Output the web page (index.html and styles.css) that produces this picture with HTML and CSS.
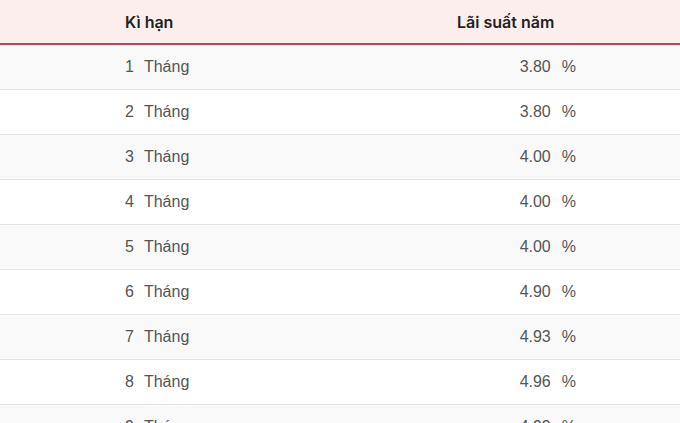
FILE: index.html
```html
<!DOCTYPE html>
<html lang="vi">
<head>
<meta charset="utf-8">
<link rel="stylesheet" href="styles.css">
</head>
<body>
<div class="table">
  <div class="row head">
    <div class="c1">Kì hạn</div>
    <div class="c2">Lãi suất năm</div>
  </div>
  <div class="row"><div class="c1"><span>1</span><span>Tháng</span></div><div class="c2 val"><span>3.80</span><span>%</span></div></div>
  <div class="row"><div class="c1"><span>2</span><span>Tháng</span></div><div class="c2 val"><span>3.80</span><span>%</span></div></div>
  <div class="row"><div class="c1"><span>3</span><span>Tháng</span></div><div class="c2 val"><span>4.00</span><span>%</span></div></div>
  <div class="row"><div class="c1"><span>4</span><span>Tháng</span></div><div class="c2 val"><span>4.00</span><span>%</span></div></div>
  <div class="row"><div class="c1"><span>5</span><span>Tháng</span></div><div class="c2 val"><span>4.00</span><span>%</span></div></div>
  <div class="row"><div class="c1"><span>6</span><span>Tháng</span></div><div class="c2 val"><span>4.90</span><span>%</span></div></div>
  <div class="row"><div class="c1"><span>7</span><span>Tháng</span></div><div class="c2 val"><span>4.93</span><span>%</span></div></div>
  <div class="row"><div class="c1"><span>8</span><span>Tháng</span></div><div class="c2 val"><span>4.96</span><span>%</span></div></div>
  <div class="row"><div class="c1"><span>9</span><span>Tháng</span></div><div class="c2 val"><span>4.99</span><span>%</span></div></div>
</div>
</body>
</html>
```
FILE: styles.css
```css
html, body {
  margin: 0;
  padding: 0;
  background: #ffffff;
  overflow: hidden;
}
.table {
  width: 680px;
  font-family: "Liberation Sans", Arial, sans-serif;
  font-size: 16px;
  color: #555555;
}
.row {
  display: grid;
  grid-template-columns: 125px 332px 119px 1fr;
  align-items: center;
  height: 44px;
  border-bottom: 1px solid #e2e2e2;
}
.row:nth-child(even) {
  background: #f9f9f9;
}
.row.head {
  height: 43px;
  background: #fdeeee;
  border-bottom: 2px solid #c0444c;
  font-family: Inter, "Noto Sans", sans-serif;
  font-weight: 600;
  color: #222222;
}
.c1 {
  grid-column: 2;
  display: flex;
  gap: 10px;
}
.c2 {
  grid-column: 3;
}
.val {
  display: flex;
  justify-content: flex-end;
  gap: 11px;
}
```
